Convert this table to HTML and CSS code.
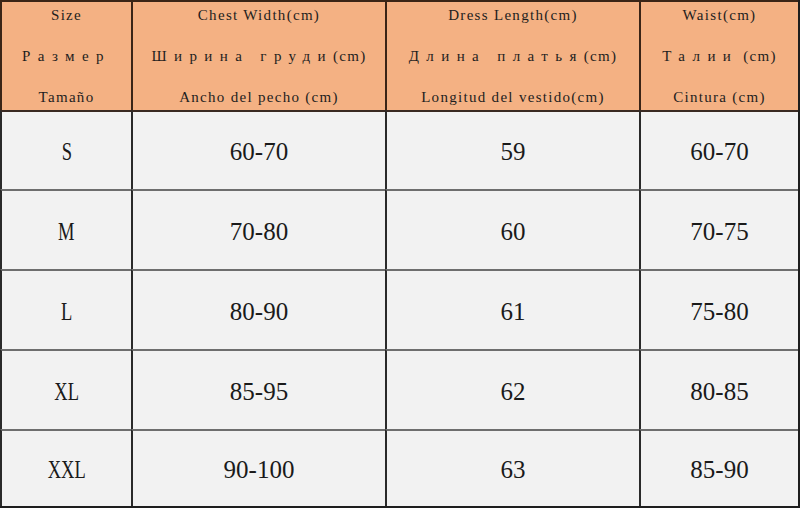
FILE: index.html
```html
<!DOCTYPE html>
<html lang="en">
<head>
<meta charset="utf-8">
<title>Size chart</title>
<link rel="stylesheet" href="styles.css">
</head>
<body>
<div class="chart">
  <div class="cell head first"><span>Size</span><span class="ru">Размер</span><span>Tamaño</span></div>
  <div class="cell head"><span>Chest Width(cm)</span><span><span class="ru">Ширина груди</span>(cm)</span><span>Ancho del pecho (cm)</span></div>
  <div class="cell head"><span>Dress Length(cm)</span><span><span class="ru">Длина платья</span>(cm)</span><span>Longitud del vestido(cm)</span></div>
  <div class="cell head"><span>Waist(cm)</span><span><span class="ru">Талии</span> (cm)</span><span>Cintura (cm)</span></div>

  <div class="cell top first"><span class="size">S</span></div>
  <div class="cell top">60-70</div>
  <div class="cell top">59</div>
  <div class="cell top">60-70</div>

  <div class="cell first"><span class="size">M</span></div>
  <div class="cell">70-80</div>
  <div class="cell">60</div>
  <div class="cell">70-75</div>

  <div class="cell first"><span class="size">L</span></div>
  <div class="cell">80-90</div>
  <div class="cell">61</div>
  <div class="cell">75-80</div>

  <div class="cell first"><span class="size">XL</span></div>
  <div class="cell">85-95</div>
  <div class="cell">62</div>
  <div class="cell">80-85</div>

  <div class="cell first"><span class="size">XXL</span></div>
  <div class="cell">90-100</div>
  <div class="cell">63</div>
  <div class="cell">85-90</div>
</div>
</body>
</html>
```

FILE: styles.css
```css
* { box-sizing: border-box; }
html, body {
  margin: 0;
  padding: 0;
  background: #f2f2f2;
}
.chart {
  width: 800px;
  height: 508px;
  display: grid;
  grid-template-columns: 131px 254px 254px 1fr;
  grid-template-rows: 110px 79px 80px 80px 80px 1fr;
  border-right: 2px solid #1e1e1e;
  border-bottom: 2px solid #1e1e1e;
  background: #f2f2f2;
}
.cell {
  border-left: 2px solid #2a2a2a;
  border-top: 2px solid #6e6e6e;
  display: flex;
  align-items: center;
  justify-content: center;
  font-family: "Liberation Serif", "Times New Roman", serif;
  font-size: 25px;
  color: #1a1a1a;
  padding-top: 3px;
}
.cell.top { border-top-color: #3a2a22; }
.head {
  background: #f4b183;
  border-top-color: #3a2416;
  border-left-color: #3a2416;
  flex-direction: column;
  justify-content: space-between;
  padding: 4px 0 4px;
  font-family: "Liberation Serif", "Times New Roman", serif;
  font-size: 15px;
  letter-spacing: 1.3px;
  line-height: 18px;
  color: #1e1e1e;
  white-space: nowrap;
}
.ru {
  letter-spacing: 7.4px;
}
.size {
  display: inline-block;
  transform: scaleX(0.74);
}
```
